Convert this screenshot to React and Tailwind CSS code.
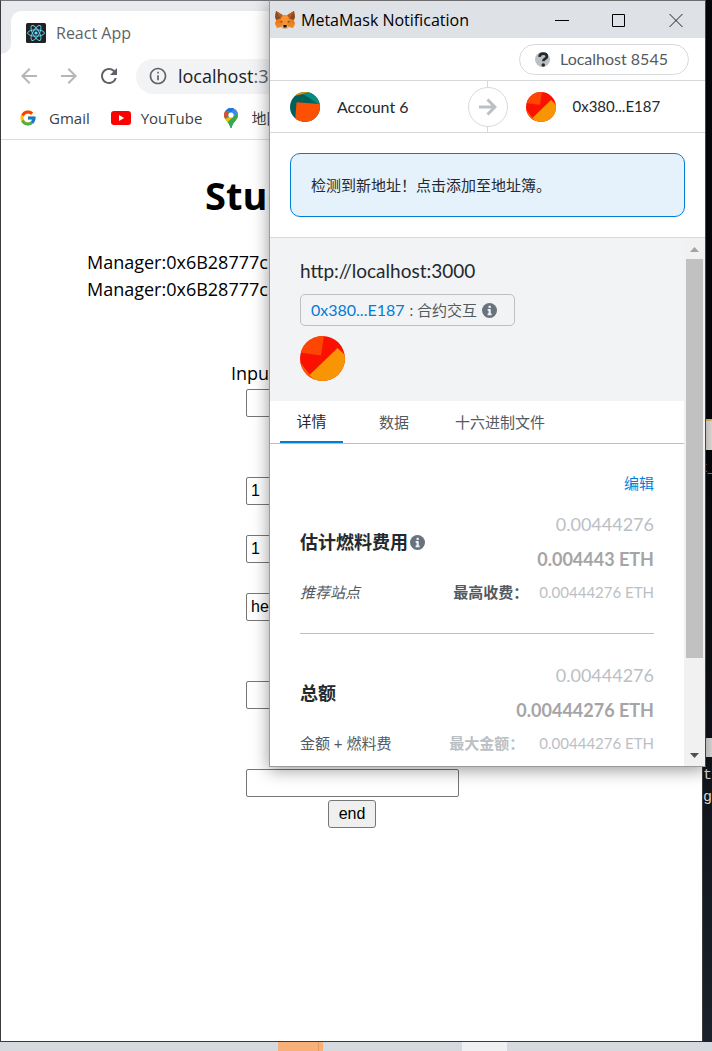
import React from "react";
import { FcGoogle } from "react-icons/fc";
import { MdArrowBack, MdArrowForward, MdRefresh, MdInfoOutline } from "react-icons/md";

const SEGOE = "font-['Open_Sans','Noto_Sans_CJK_SC',sans-serif]";
const EUCLID = "font-[Lato,'Noto_Sans_CJK_SC',sans-serif]";

function ReactLogo() {
  return (
    <svg viewBox="0 0 20 20" className="size-5 shrink-0" aria-hidden="true">
      <rect width="20" height="20" rx="1.5" fill="#222" />
      <g fill="none" stroke="#61dafb" strokeWidth="0.9">
        <ellipse cx="10" cy="10" rx="8.4" ry="3.2" />
        <ellipse cx="10" cy="10" rx="8.4" ry="3.2" transform="rotate(60 10 10)" />
        <ellipse cx="10" cy="10" rx="8.4" ry="3.2" transform="rotate(120 10 10)" />
      </g>
      <circle cx="10" cy="10" r="1.6" fill="#61dafb" />
    </svg>
  );
}

function YouTubeLogo() {
  return (
    <svg viewBox="0 0 20 14" className="w-5 h-[14px] shrink-0" aria-hidden="true">
      <rect width="20" height="14" rx="3" fill="#f00" />
      <path d="M8 4v6l5.2-3z" fill="#fff" />
    </svg>
  );
}

function MapsLogo() {
  return (
    <svg viewBox="0 0 14 20" className="w-[14px] h-5 shrink-0" aria-hidden="true">
      <clipPath id="pin">
        <path d="M7 0a7 7 0 0 1 7 7c0 5-5.2 6.600-6.300 12.400a.75.75 0 0 1-1.400 0C5.200 13.600 0 12 0 7a7 7 0 0 1 7-7z" />
      </clipPath>
      <g clipPath="url(#pin)">
        <rect width="14" height="20" fill="#34a853" />
        <path d="M0 11.500 4.600 9.600 9.500 3.500 14 0v10L5 16 0 13z" fill="#fbbc04" />
        <path d="M9.600 8.600 14 3v17H4.500L3.600 14z" fill="#34a853" />
        <path d="M4 0h10v3.400L9.300 9 7 7z" fill="#4285f4" />
        <path d="M1.700 2.400 4.500 0h6L7 4z" fill="#1a73e8" />
        <path d="M0 2.500h1.700L5.300 5.500 0 11.800z" fill="#ea4335" />
      </g>
      <circle cx="7" cy="7" r="2.600" fill="#fff" />
    </svg>
  );
}

function Fox() {
  return (
    <svg viewBox="0 0 20 18" className="w-5 h-[18px] shrink-0" aria-hidden="true">
      <path d="M1 0 8 4h4l7-4 1 6-1.200 3.500L20 13l-2 4-4-1-2.500 2h-3L6 16l-4 1-2-4 1.200-3.500L0 6z" fill="#f0841f" />
      <path d="M1 0 7.600 4.200 5.500 7.600 1.200 9 0 6zM19 0l-6.600 4.200 2.100 3.400 4.300 1.400L20 6z" fill="#8a4a22" />
      <path d="M1 0 5.500 7.600 7.600 4.200zM19 0l-4.500 7.600-2.100-3.400z" fill="#b5602a" />
      <path d="M7.600 4.200h4.800l1.800 4.500-2 5.300H7.800L5.800 8.700z" fill="#f69334" />
      <path d="M1.200 9.300 5.800 8.400 5.500 12 .2 12.800zM18.800 9.300l-4.600-.9.300 3.600 5.300.8z" fill="#ea7a1c" />
      <path d="m5 10 2.700.8-.8 1zM15 10l-2.700.8.800 1z" fill="#233447" />
      <path d="M6 15.800 8 14.300h4l2 1.500-2.500 2.200h-3z" fill="#cdbdb2" />
      <path d="m8.200 14.500.6-.6h2.400l.6.600-.3 2h-3z" fill="#161616" />
    </svg>
  );
}

function AccountAvatar() {
  return (
    <svg viewBox="0 0 30 30" className="size-[30px] shrink-0" aria-hidden="true">
      <clipPath id="acct"><circle cx="15" cy="15" r="15" /></clipPath>
      <g clipPath="url(#acct)">
        <rect width="30" height="30" fill="#01605c" />
        <path d="M4 4 13 2l9-2H8z" fill="#f18a02" />
        <path d="m13 2 6-2h11v13z" fill="#018e7f" />
        <path d="m6.500 10.300 24 1.700v19H5z" fill="#fc5004" />
      </g>
    </svg>
  );
}

function ContractAvatar({ id, className }) {
  return (
    <svg viewBox="0 0 45 45" className={className} aria-hidden="true">
      <clipPath id={id}><circle cx="22.500" cy="22.500" r="22.500" /></clipPath>
      <g clipPath={`url(#${id})`}>
        <rect width="45" height="45" fill="#fb1101" />
        <path d="M0 0h24l-3 19.500L0 16.500z" fill="#fc4602" />
        <path d="m9.500 39 28-27L47 21v26H14z" fill="#f79502" />
        <path d="M0 26 10 39l5 6H0z" fill="#f95c02" />
      </g>
    </svg>
  );
}

function InfoDot() {
  return (
    <svg viewBox="0 0 16 16" className="size-[15px] shrink-0" aria-hidden="true">
      <circle cx="8" cy="8" r="8" fill="#6a737d" />
      <path d="M7 3h2.300v2.200H7zM6 6.500h3.300v4.700h1V13H6v-1.800h1V8.200H6z" fill="#f2f3f4" />
    </svg>
  );
}

function Field({ label, value = "", className }) {
  return (
    <input
      aria-label={label}
      defaultValue={value}
      className={`block h-7 w-[213px] rounded-[2px] border border-[#767676] bg-white px-1 font-['Liberation_Sans',sans-serif] text-[16px] text-black ${className}`}
    />
  );
}

function BrowserWindow() {
  return (
    <div className={`flex min-w-0 flex-1 flex-col overflow-hidden border border-[#3b3b3f] border-t-[#77777b] bg-white ${SEGOE}`}>
      <div className="flex h-[53px] shrink-0 bg-white">
        <div className="w-[10px] rounded-br-[10px] bg-[#e8eaed]" />
        <div className="flex-1 bg-[#e8eaed] pt-[10px]">
          <div className="flex h-full items-center gap-[10px] whitespace-nowrap rounded-tl-[10px] bg-white pl-[15px] text-[#5f6368]">
            <ReactLogo />
            <span className="text-[16px] leading-5">React App</span>
          </div>
        </div>
      </div>
      <div className="flex h-[54px] shrink-0 items-center pl-4 pb-[10px]">
        <button aria-label="Back" className="mr-4 text-[#b4b6b8]"><MdArrowBack className="size-6" /></button>
        <button aria-label="Forward" className="mr-4 text-[#b4b6b8]"><MdArrowForward className="size-6" /></button>
        <button aria-label="Reload" className="text-[#5f6368]"><MdRefresh className="size-6" /></button>
        <div className="ml-[15px] flex h-[35px] flex-1 items-center gap-[10px] rounded-full bg-[#f1f3f4] pl-3 text-[18px]">
          <MdInfoOutline className="size-5 text-[#5f6368]" />
          <span className="text-[#202124]">localhost<span className="text-[#5f6368]">:3000</span></span>
        </div>
      </div>
      <nav className="flex h-[32px] shrink-0 items-start border-b border-[#dadce0] pl-[18px] text-[15px] leading-5 text-[#3c4043]">
        <a href="#gmail" className="flex items-center gap-3 whitespace-nowrap"><FcGoogle className="size-[18px]" />Gmail</a>
        <a href="#youtube" className="ml-[21px] flex items-center gap-[10px] whitespace-nowrap"><YouTubeLogo />YouTube</a>
        <a href="#maps" className="ml-[22px] flex items-center gap-[13px] whitespace-nowrap"><MapsLogo />地图</a>
      </nav>
      <main className="flex flex-1 flex-col pt-7 text-[18px] leading-[27px] text-black">
        <h1 className="pl-[204px] text-[38px] font-bold leading-[54px]">Stude</h1>
        <div className="mt-[27px] pl-[86px]">
          <p>Manager:0x6B28777c</p>
          <p>Manager:0x6B28777c</p>
        </div>
        <p className="mt-[57px] pl-[230px]">Input</p>
        <div className="flex flex-col pl-[245px]">
          <Field label="Input" className="mt-[2px]" />
          <Field label="Id" value="1" className="mt-[60px]" />
          <Field label="Number" value="1" className="mt-[30px]" />
          <Field label="Name" value="hello" className="mt-[30px]" />
          <Field label="Query" className="mt-[60px]" />
          <Field label="Result" className="mt-[60px]" />
          <div className="mt-[3px] flex w-[212px] justify-center">
            <button className="h-7 w-12 rounded-[3px] border border-[#767676] bg-[#efefef] font-['Liberation_Sans',sans-serif] text-[16px] leading-6">end</button>
          </div>
        </div>
      </main>
    </div>
  );
}

function FeeBlock({ title, info, amount, note, maxLabel, noteClass, maxClass }) {
  return (
    <div className="flex flex-col text-[15px]">
      <div className="flex items-center justify-between">
        <div className="flex items-center gap-[2px] text-[18px] font-bold leading-6 text-[#24292e]">{title}{info && <InfoDot />}</div>
        <div className="flex flex-col text-right text-[18px] leading-[35px]">
          <span className="text-[#bbc0c5]">0.00444276</span>
          <span className="font-bold text-[#a5a5a7]">{amount} ETH</span>
        </div>
      </div>
      <div className="mt-1 flex h-[23px] items-center">
        <span className={`flex-1 text-[#535a61] ${noteClass}`}>{note}</span>
        <span className={`font-bold ${maxClass}`}>{maxLabel}</span>
        <span className="text-[#bbc0c5]">0.00444276 ETH</span>
      </div>
    </div>
  );
}

function MetaMaskWindow() {
  return (
    <section className={`absolute left-[269px] top-0 flex h-[767px] w-[437px] flex-col border border-[#9b9b9d] border-r-[#444] border-t-[#6d6d70] bg-white shadow-[0_3px_16px_rgba(0,0,0,0.4)] ${EUCLID}`}>
      <header className={`flex h-[37px] shrink-0 items-center bg-[#dee1e6] pl-[5px] text-black ${SEGOE}`}>
        <Fox />
        <h2 className="ml-[6px] flex-1 whitespace-nowrap text-[16px]">MetaMask Notification</h2>
        <div className="flex items-center gap-[43px] pr-[22px]">
          <button aria-label="Minimize"><svg viewBox="0 0 14 14" className="size-[14px]"><path d="M0 7.500h14" stroke="#000" /></svg></button>
          <button aria-label="Maximize"><svg viewBox="0 0 14 14" className="size-[14px]"><path d="M.5 1.500h12v12H.5z" fill="none" stroke="#000" /></svg></button>
          <button aria-label="Close"><svg viewBox="0 0 14 14" className="size-[14px]"><path d="m.5 1 13 13M13.500 1 .5 14" stroke="#222" /></svg></button>
        </div>
      </header>
      <div className="flex h-[43px] shrink-0 items-center justify-end border-b border-[#d6d9dc] pr-4">
        <div className="flex h-[31px] w-[170px] items-center gap-[10px] rounded-full border border-[#d6d9dc] pl-[15px] text-[16px] text-[#535a61]">
          <svg viewBox="0 0 16 16" className="size-[15px] shrink-0" aria-hidden="true">
            <circle cx="8" cy="8" r="8" fill="#bbc0c5" />
            <path d="M4.800 5.300C5 2.800 6.600 1.700 8.700 1.700c2.300 0 3.900 1.100 3.900 3 0 2.800-3.700 2.600-3.700 5.100" fill="none" stroke="#24292e" strokeWidth="2.900" />
            <circle cx="8.800" cy="13.800" r="1.900" fill="#24292e" />
          </svg>
          Localhost 8545
        </div>
      </div>
      <div className="flex h-[52px] shrink-0 items-center border-b border-[#d6d9dc] pr-[2px] text-[#24292e]">
        <div className="flex flex-1 items-center gap-[17px] pl-5"><AccountAvatar /><span className="text-[16px]">Account 6</span></div>
        <div className="flex h-full w-10 flex-col items-center">
          <div className="w-px flex-1 bg-[#d6d9dc]" />
          <div className="flex size-10 shrink-0 items-center justify-center rounded-full border border-[#d6d9dc]">
            <svg viewBox="0 0 18 18" className="size-[18px]" fill="none" stroke="#bbc0c5" strokeWidth="3" aria-hidden="true"><path d="M0 9h16M8.500 1.500 16 9l-7.500 7.500" /></svg>
          </div>
          <div className="w-px flex-1 bg-[#d6d9dc]" />
        </div>
        <div className="flex flex-1 items-center gap-[17px] pl-[18px]"><ContractAvatar id="cA" className="size-[30px] shrink-0" /><span className="text-[15px]">0x380...E187</span></div>
      </div>
      <div className="shrink-0 border-b border-[#d6d9dc] px-5 py-5">
        <button className="flex h-16 w-full items-center rounded-[10px] border border-[#037dd6] bg-[#e5f1fb] pl-5 text-[15px] text-[#24292e]">检测到新地址！点击添加至地址簿。</button>
      </div>
      <div className="flex min-h-0 flex-1">
        <div className="flex min-w-0 flex-1 flex-col overflow-hidden">
          <div className="flex h-[163px] shrink-0 flex-col items-start bg-[#f2f3f4] pl-[30px] pt-5">
            <p className="text-[19px] leading-[26px] text-[#24292e]">http://localhost:3000</p>
            <div className="mt-[10px] flex h-8 w-[215px] items-center gap-[5px] rounded-[5px] border border-[#bbc0c5] pl-[10px] text-[15px] text-[#535a61]">
              <a href="#contract" className="text-[16px] text-[#037dd6]">0x380...E187</a>
              <span>: 合约交互</span>
              <InfoDot />
            </div>
            <ContractAvatar id="cB" className="mt-[10px] size-[45px]" />
          </div>
          <div role="tablist" className="flex h-[43px] shrink-0 border-b border-[#bbc0c5] pl-[10px] text-[15px] text-[#535a61]">
            <button role="tab" aria-selected="true" className="w-[63px] border-b-2 border-[#037dd6] text-[#24292e]">详情</button>
            <button role="tab" aria-selected="false" className="w-[102px]">数据</button>
            <button role="tab" aria-selected="false" className="ml-[10px] w-[90px] whitespace-nowrap">十六进制文件</button>
          </div>
          <div className="flex flex-col px-[30px] pt-[26px]">
            <button className="mb-[11px] self-end text-[15px] leading-[26px] text-[#037dd6]">编辑</button>
            <FeeBlock title="估计燃料费用" info amount="0.004443" note="推荐站点" noteClass="italic" maxLabel="最高收费：" maxClass="mr-[11px] text-[#535a61]" />
            <hr className="mb-6 mt-[29px] border-t border-[#bbc0c5]" />
            <FeeBlock title="总额" amount="0.00444276" note="金额 + 燃料费" noteClass="" maxLabel="最大金额：" maxClass="mr-[15px] text-[#bbc0c5]" />
          </div>
        </div>
        <div className="flex w-[21px] shrink-0 flex-col items-center bg-[#f1f1f1]" aria-hidden="true">
          <svg viewBox="0 0 21 21" className="size-[21px] shrink-0"><path d="m6 14 4.500-5 4.500 5z" fill="#a3a3a3" /></svg>
          <div className="h-[399px] w-[17px] shrink-0 bg-[#c1c1c1]" />
          <div className="flex-1" />
          <svg viewBox="0 0 21 21" className="size-[21px] shrink-0"><path d="m6 8 4.500 5L15 8z" fill="#505050" /></svg>
        </div>
      </div>
    </section>
  );
}

export default function App() {
  return (
    <div className="relative flex min-h-screen flex-col overflow-hidden bg-[#080b10]">
      <div className="flex flex-1">
        <BrowserWindow />
        <div className="flex w-[9px] shrink-0 flex-col bg-linear-to-b from-[#05070b] from-40% to-[#1b222b] font-['Liberation_Mono',monospace] text-[15px] leading-[22px] text-[#d8d8d8]">
          <div className="mt-[419px] h-[31px] shrink-0 border-t-2 border-[#e9c46a] bg-[#eeeae4]" />
          <span className="mt-2 shrink-0 self-center">k_</span>
          <div className="mt-[258px] h-[19px] shrink-0 bg-[#e4e4e4]" />
          <span className="mt-2 shrink-0">t</span>
          <span className="shrink-0">g</span>
        </div>
      </div>
      <div className="flex h-[9px] shrink-0 bg-[#d6dade] pl-[278px]">
        <div className="w-10 bg-[#f8b078]" />
        <div className="w-[5px] border-l border-[#e39c63] bg-[#f8b078]" />
        <div className="ml-[139px] w-[45px] bg-[#eff0f2]" />
      </div>
      <MetaMaskWindow />
    </div>
  );
}
